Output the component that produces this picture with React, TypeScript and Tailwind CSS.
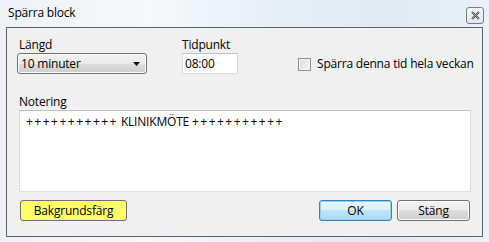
import React from "react";

const font = { fontFamily: '"Open Sans", "Noto Sans", sans-serif' };

function CloseIcon() {
  return (
    <svg width="9" height="9" viewBox="0 0 9 9">
      <path d="M1 1 L8 8 M8 1 L1 8" stroke="#4a4a4a" strokeWidth="2" />
      <path d="M1 1 L8 8 M8 1 L1 8" stroke="#d8d8d8" strokeWidth="0.6" />
    </svg>
  );
}

function WinButton({ children, primary, className = "" }: { children: React.ReactNode; primary?: boolean; className?: string }) {
  return (
    <button
      className={
        "h-[21px] rounded-[3px] border text-[12px] leading-none text-black flex items-center justify-center " +
        (primary
          ? "border-[#3c7fb1] shadow-[inset_0_0_0_1px_#98d1ef] bg-[linear-gradient(#eaf6fd_0%,#d9f0fc_50%,#bee6fd_50%,#a7d9f5_100%)] "
          : "border-[#707070] shadow-[inset_0_0_0_1px_#fcfcfc] bg-[linear-gradient(#f2f2f2_0%,#ebebeb_50%,#dddddd_50%,#cfcfcf_100%)] ") +
        className
      }
    >
      {children}
    </button>
  );
}

export default function App() {
  return (
    <div
      className="w-[489px] h-[242px] flex flex-col bg-[linear-gradient(90deg,#eef2f6_0%,#f6f8fa_30%,#e4eef6_60%,#dfeaf3_80%,#eaf1f7_100%)] overflow-hidden tracking-[-0.2px]"
      style={font}
    >
      <div className="h-[27px] flex items-start justify-between pl-[8px] pr-[5px] pt-[5px]">
        <span className="text-[12px] leading-[15px] text-black">Spärra block</span>
        <div className="mt-[2px] w-[18px] h-[17px] rounded-[3px] border border-[#737b84] bg-[linear-gradient(#f4f6f8,#e2e6ea)] flex items-center justify-center">
          <CloseIcon />
        </div>
      </div>
      <div className="mx-[6px] w-[477px] h-[210px] border border-[#5f6368] bg-[#f0f0f0] flex flex-col text-[12px] leading-[15px] text-black">
        <div className="flex pt-[9px] pl-[10px]">
          <div className="w-[165px] flex flex-col">
            <span className="pl-[2px]">Längd</span>
            <div className="mt-[1px] w-[130px] h-[21px] rounded-[3px] border border-[#707070] bg-[linear-gradient(#f2f2f2_0%,#ebebeb_50%,#dddddd_50%,#cfcfcf_100%)] shadow-[inset_0_0_0_1px_#fafafa] flex items-center justify-between pl-[3px] pr-[6px]">
              <span>10 minuter</span>
              <svg width="7" height="4" viewBox="0 0 7 4">
                <path d="M0 0 H7 L3.5 4 Z" fill="#111" />
              </svg>
            </div>
          </div>
          <div className="w-[116px] flex flex-col">
            <span>Tidpunkt</span>
            <div className="mt-[1px] w-[56px] h-[21px] border border-[#d5dbe3] border-t-[#b9c2cc] bg-white flex items-center pl-[2px]">
              08:00
            </div>
          </div>
          <div className="flex items-center gap-[6px] pt-[20px] self-start">
            <div className="w-[13px] h-[13px] border border-[#8e8f8f] bg-[linear-gradient(135deg,#dcdcdc,#f6f6f6)] shadow-[inset_0_0_0_1px_#f4f4f4]" />
            <span className="mt-[-1px]">Spärra denna tid hela veckan</span>
          </div>
        </div>
        <div className="pl-[12px] mt-[20px]">Notering</div>
        <div className="ml-[12px] mt-[1px] w-[452px] h-[82px] border border-[#d8e0e8] border-t-[#b6c1cc] bg-white px-[6px] pt-[3px]">
          <span className="tracking-[1.5px]">+++++++++++</span> KLINIKMÖTE <span className="tracking-[1.5px]">+++++++++++</span>
        </div>
        <div className="flex items-center mt-[8px] pl-[13px] pr-[12px]">
          <WinButton className="w-[107px] !bg-[#ffff66] !bg-none shadow-none">Bakgrundsfärg</WinButton>
          <div className="flex-1" />
          <WinButton primary className="w-[73px]">OK</WinButton>
          <WinButton className="w-[73px] ml-[5px]">Stäng</WinButton>
        </div>
      </div>
    </div>
  );
}
